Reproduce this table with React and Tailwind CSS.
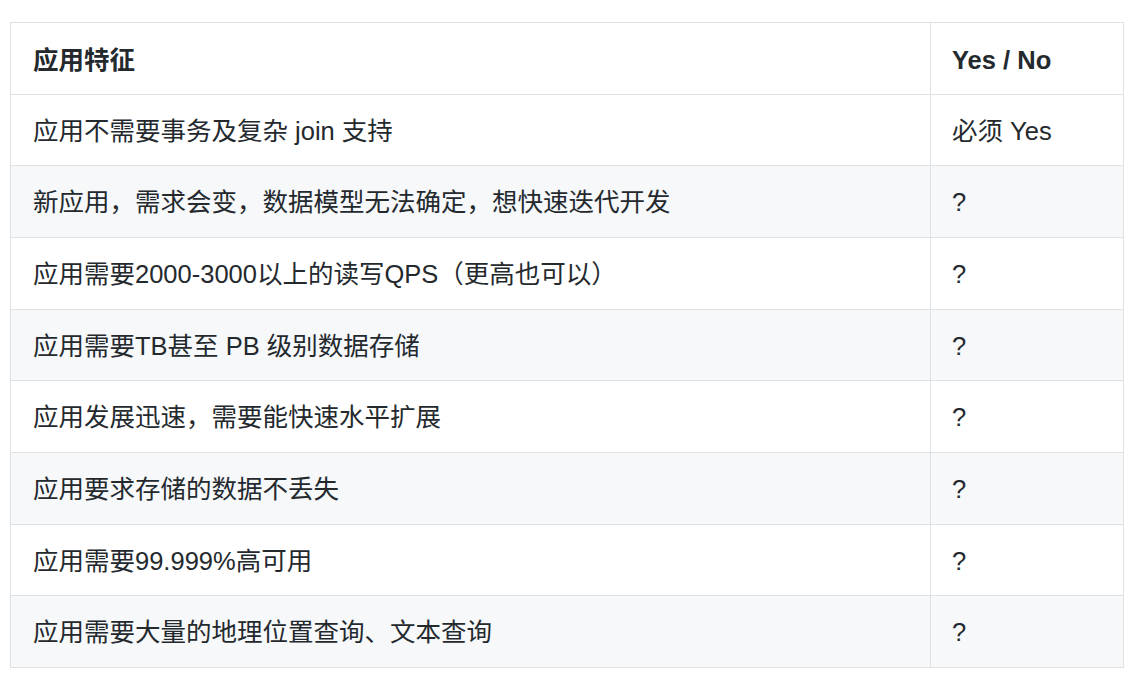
import React from "react";

const rows = [
  ["应用不需要事务及复杂 join 支持", "必须 Yes", "h-[71px]"],
  ["新应用，需求会变，数据模型无法确定，想快速迭代开发", "?", "h-[72px]"],
  ["应用需要2000-3000以上的读写QPS（更高也可以）", "?", "h-[72px]"],
  ["应用需要TB甚至 PB 级别数据存储", "?", "h-[71px]"],
  ["应用发展迅速，需要能快速水平扩展", "?", "h-[72px]"],
  ["应用要求存储的数据不丢失", "?", "h-[72px]"],
  ["应用需要99.999%高可用", "?", "h-[71px]"],
  ["应用需要大量的地理位置查询、文本查询", "?", "h-[72px]"],
];

const font = { fontFamily: '"Liberation Sans", "Noto Sans CJK SC", sans-serif' };

export default function App() {
  return (
    <div className="w-[1147px] h-[680px] bg-white pt-[22px] pl-[10px]" style={font}>
      <div className="w-[1114px] border border-[#dfe2e5] text-[#24292e] text-[25.5px]">
        <div className="grid grid-cols-[920px_1fr] h-[71px] font-bold">
          <div className="flex items-center px-[22px] pt-[3px] border-r border-[#dfe2e5]">应用特征</div>
          <div className="flex items-center px-[21px] pt-[3px]">Yes / No</div>
        </div>
        {rows.map(([a, b, h], i) => (
          <div
            key={i}
            className={`grid grid-cols-[920px_1fr] border-t border-[#dfe2e5] ${h} ${i % 2 === 1 ? "bg-[#f6f8fa]" : "bg-white"}`}
          >
            <div className="flex items-center px-[22px] pt-[2px] border-r border-[#dfe2e5]">{a}</div>
            <div className="flex items-center px-[21px] pt-[2px]">{b}</div>
          </div>
        ))}
      </div>
    </div>
  );
}
